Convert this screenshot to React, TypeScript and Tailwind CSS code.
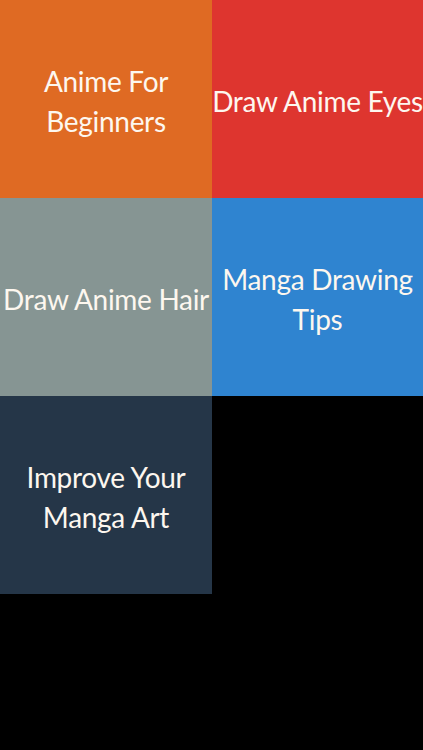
const tiles = [
  { label: 'Anime For Beginners', bg: 'bg-[#df6a23]', lines: ['Anime For', 'Beginners'] },
  { label: 'Draw Anime Eyes', bg: 'bg-[#de352f]', lines: ['Draw Anime Eyes'] },
  { label: 'Draw Anime Hair', bg: 'bg-[#869593]', lines: ['Draw Anime Hair'] },
  { label: 'Manga Drawing Tips', bg: 'bg-[#2f84d0]', lines: ['Manga Drawing', 'Tips'] },
  { label: 'Improve Your Manga Art', bg: 'bg-[#253648]', lines: ['Improve Your', 'Manga Art'] },
];

export default function App() {
  return (
    <div className="min-h-[750px] w-[423px] bg-black font-['Lato',sans-serif]">
      <div className="grid grid-cols-[212px_211px]">
        {tiles.map((t) => (
          <button
            key={t.label}
            className={`${t.bg} h-[198px] pt-1 flex flex-col items-center justify-center text-[#fdf7ef] text-[28px] leading-[40px] whitespace-nowrap tracking-[-0.3px]`}
          >
            {t.lines.map((l) => (
              <span key={l}>{l}</span>
            ))}
          </button>
        ))}
      </div>
    </div>
  );
}
